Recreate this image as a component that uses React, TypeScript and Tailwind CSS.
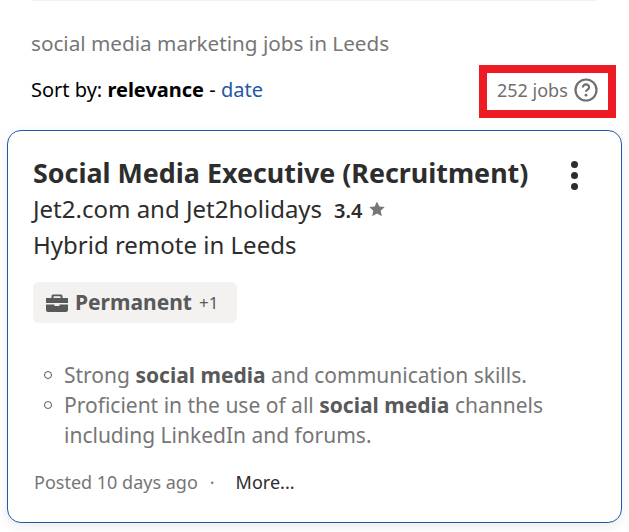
const font = { fontFamily: '"Noto Sans", sans-serif' };

function Briefcase() {
  return (
    <svg width="22" height="18" viewBox="0 0 22 18" fill="#595959" className="shrink-0">
      <path d="M7 0.5h8a1.5 1.5 0 0 1 1.5 1.5v2H22V9H0V4h5.5V2A1.5 1.5 0 0 1 7 0.5zM7.5 2.2V4h7V2.2z" fillRule="evenodd" />
      <path d="M0 10.5h8.5v1.5h5v-1.5H22V16a2 2 0 0 1-2 2H2a2 2 0 0 1-2-2z" />
    </svg>
  );
}

export default function App() {
  return (
    <div className="w-[629px] h-[532px] bg-white overflow-hidden" style={font}>
      <div className="mx-[31px] w-[566px] h-px bg-[#f3f2f1]" />
      <p className="ml-[31px] mt-[28px] text-[20.7px] leading-[28px] text-[#767676]">
        social media marketing jobs in Leeds
      </p>
      <div className="flex items-start justify-between pl-[31px] pr-[13px] mt-[8px] h-[53px]">
        <p className="mt-[11px] text-[20px] leading-[28px] text-[#000]">
          Sort by: <b className="font-bold">relevance</b> - <span className="text-[#2557a7]">date</span>
        </p>
        <div className="flex items-center w-[137px] h-[53px] border-[8px] border-[#ed1c24] pl-[10px] gap-[5px]">
          <span className="text-[18px] leading-[24px] text-[#6f6f6f] -mt-[4px]">252 jobs</span>
          <svg width="24" height="24" viewBox="0 0 24 24" fill="none" className="shrink-0 -mt-[3px] ml-[1px]">
            <circle cx="12" cy="12" r="10.5" stroke="#6f6f6f" strokeWidth="2.2" />
            <path d="M8.9 9.4a3.1 3.1 0 0 1 6.2 0c0 2-3.1 2.3-3.1 4.4" stroke="#6f6f6f" strokeWidth="2.2" />
            <circle cx="12" cy="17.2" r="1.4" fill="#6f6f6f" />
          </svg>
        </div>
      </div>
      <div className="mx-[7px] mt-[12px] w-[615px] h-[393px] border border-[#2557a7] rounded-[14px] bg-white shadow-[0_4px_12px_rgba(0,0,0,0.08)] pl-[25px] pr-[33px] pt-[24px]">
        <div className="flex items-start justify-between">
          <h2 className="text-[26.85px] leading-[36px] font-bold text-[#2d2d2d] whitespace-nowrap">
            Social Media Executive (Recruitment)
          </h2>
          <div className="flex flex-col gap-[4px] mt-[6px] mr-[10px]">
            <span className="w-[7px] h-[7px] rounded-full bg-[#2d2d2d]" />
            <span className="w-[7px] h-[7px] rounded-full bg-[#2d2d2d]" />
            <span className="w-[7px] h-[7px] rounded-full bg-[#2d2d2d]" />
          </div>
        </div>
        <div className="flex items-center h-[36px]">
          <span className="text-[24px] leading-[36px] text-[#2d2d2d]">Jet2.com and Jet2holidays</span>
          <span className="ml-[12px] text-[20px] font-semibold text-[#2d2d2d] mt-[4px]">3.4</span>
          <svg width="16" height="16" viewBox="0 0 16 16" fill="#767676" className="ml-[6px]">
            <path d="M8 .5l2.3 5 5.4.6-4 3.7 1.1 5.4L8 12.5l-4.8 2.7 1.1-5.4-4-3.7 5.4-.6z" />
          </svg>
        </div>
        <p className="text-[24px] leading-[36px] text-[#2d2d2d]">Hybrid remote in Leeds</p>
        <div className="mt-[19px] inline-flex items-center h-[41px] pl-[13px] pr-[19px] rounded-[6px] bg-[#f3f2f1] gap-[7px]">
          <Briefcase />
          <span className="text-[21px] font-bold text-[#595959]">Permanent</span>
          <span className="text-[17px] text-[#595959]">+1</span>
        </div>
        <ul className="mt-[37px] text-[#767676] text-[21px] leading-[30px]">
          <li className="flex">
            <span className="w-[8px] h-[8px] mt-[11px] ml-[11px] mr-[12px] shrink-0 rounded-full border border-[#595959]" />
            <span>
              Strong <b className="text-[#595959]">social media</b> and communication skills.
            </span>
          </li>
          <li className="flex">
            <span className="w-[8px] h-[8px] mt-[11px] ml-[11px] mr-[12px] shrink-0 rounded-full border border-[#595959]" />
            <span>
              Proficient in the use of all <b className="text-[#595959]">social media</b> channels including LinkedIn and forums.
            </span>
          </li>
        </ul>
        <div className="flex items-center mt-[20px] text-[18px] leading-[24px] ml-[1px]">
          <span className="text-[#767676]">Posted 10 days ago</span>
          <span className="text-[#767676] ml-[12px]">·</span>
          <span className="text-[#2d2d2d] ml-[21px]">More...</span>
        </div>
      </div>
    </div>
  );
}
